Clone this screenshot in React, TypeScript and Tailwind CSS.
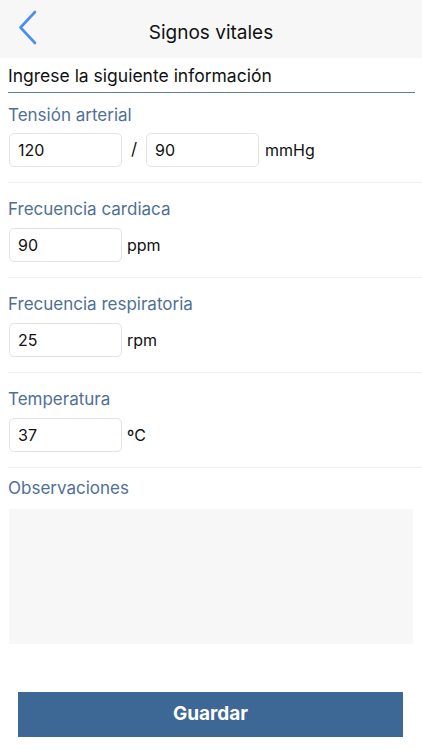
import React from "react";

const font = { fontFamily: "Inter, 'Noto Sans', sans-serif" };

function Field({ value }: { value: string }) {
  return (
    <div className="w-[113px] h-[34px] border border-[#e3e3e3] rounded-[5px] flex items-center pl-[8px] text-[16px] text-[#111]">
      {value}
    </div>
  );
}

function Label({ text, top }: { text: string; top: string }) {
  return <div className={`${top} text-[17px] leading-[22px] text-[#4f7096]`}>{text}</div>;
}

export default function App() {
  return (
    <div className="w-[422px] h-[750px] bg-white flex flex-col" style={font}>
      <div className="h-[58px] bg-[#f7f7f7] relative flex items-center justify-center shrink-0">
        <svg className="absolute left-[16px] top-[10px]" width="24" height="36" viewBox="0 0 24 36">
          <path d="M19 2 L4.5 17.5 L19 33" fill="none" stroke="#4a8ef0" strokeWidth="2.6" strokeLinecap="round" strokeLinejoin="round" />
        </svg>
        <div className="text-[19px] text-[#111] mt-[8px]">Signos vitales</div>
      </div>
      <div className="flex flex-col pl-[8px]">
        <div className="mr-[7px] h-[35px] border-b-[1.5px] border-[#5b7ea5] flex items-end pb-[3px] text-[17.5px] text-[#111]">
          Ingrese la siguiente información
        </div>

        <Label text="Tensión arterial" top="mt-[11px]" />
        <div className="mt-[7px] flex items-center pl-[1px]">
          <Field value="120" />
          <div className="w-[24px] text-center text-[17px] text-[#111]">/</div>
          <Field value="90" />
          <div className="ml-[6px] text-[16px] text-[#111]">mmHg</div>
        </div>
        <div className="mt-[15px] h-px bg-[#efeff2]" />

        <Label text="Frecuencia cardiaca" top="mt-[15px]" />
        <div className="mt-[8px] flex items-center pl-[1px]">
          <Field value="90" />
          <div className="ml-[5px] text-[16px] text-[#111]">ppm</div>
        </div>
        <div className="mt-[15px] h-px bg-[#efeff2]" />

        <Label text="Frecuencia respiratoria" top="mt-[15px]" />
        <div className="mt-[8px] flex items-center pl-[1px]">
          <Field value="25" />
          <div className="ml-[5px] text-[16px] text-[#111]">rpm</div>
        </div>
        <div className="mt-[15px] h-px bg-[#efeff2]" />

        <Label text="Temperatura" top="mt-[15px]" />
        <div className="mt-[8px] flex items-center pl-[1px]">
          <Field value="37" />
          <div className="ml-[5px] text-[16px] text-[#111]">ºC</div>
        </div>
        <div className="mt-[15px] h-px bg-[#efeff2]" />

        <Label text="Observaciones" top="mt-[9px]" />
        <div className="mt-[10px] ml-[1px] w-[404px] h-[135px] bg-[#f7f7f7]" />
      </div>
      <div className="mt-[48px] ml-[18px] w-[385px] h-[45px] bg-[#3d6795] flex items-center justify-center text-white text-[19px] font-bold">
        Guardar
      </div>
    </div>
  );
}
